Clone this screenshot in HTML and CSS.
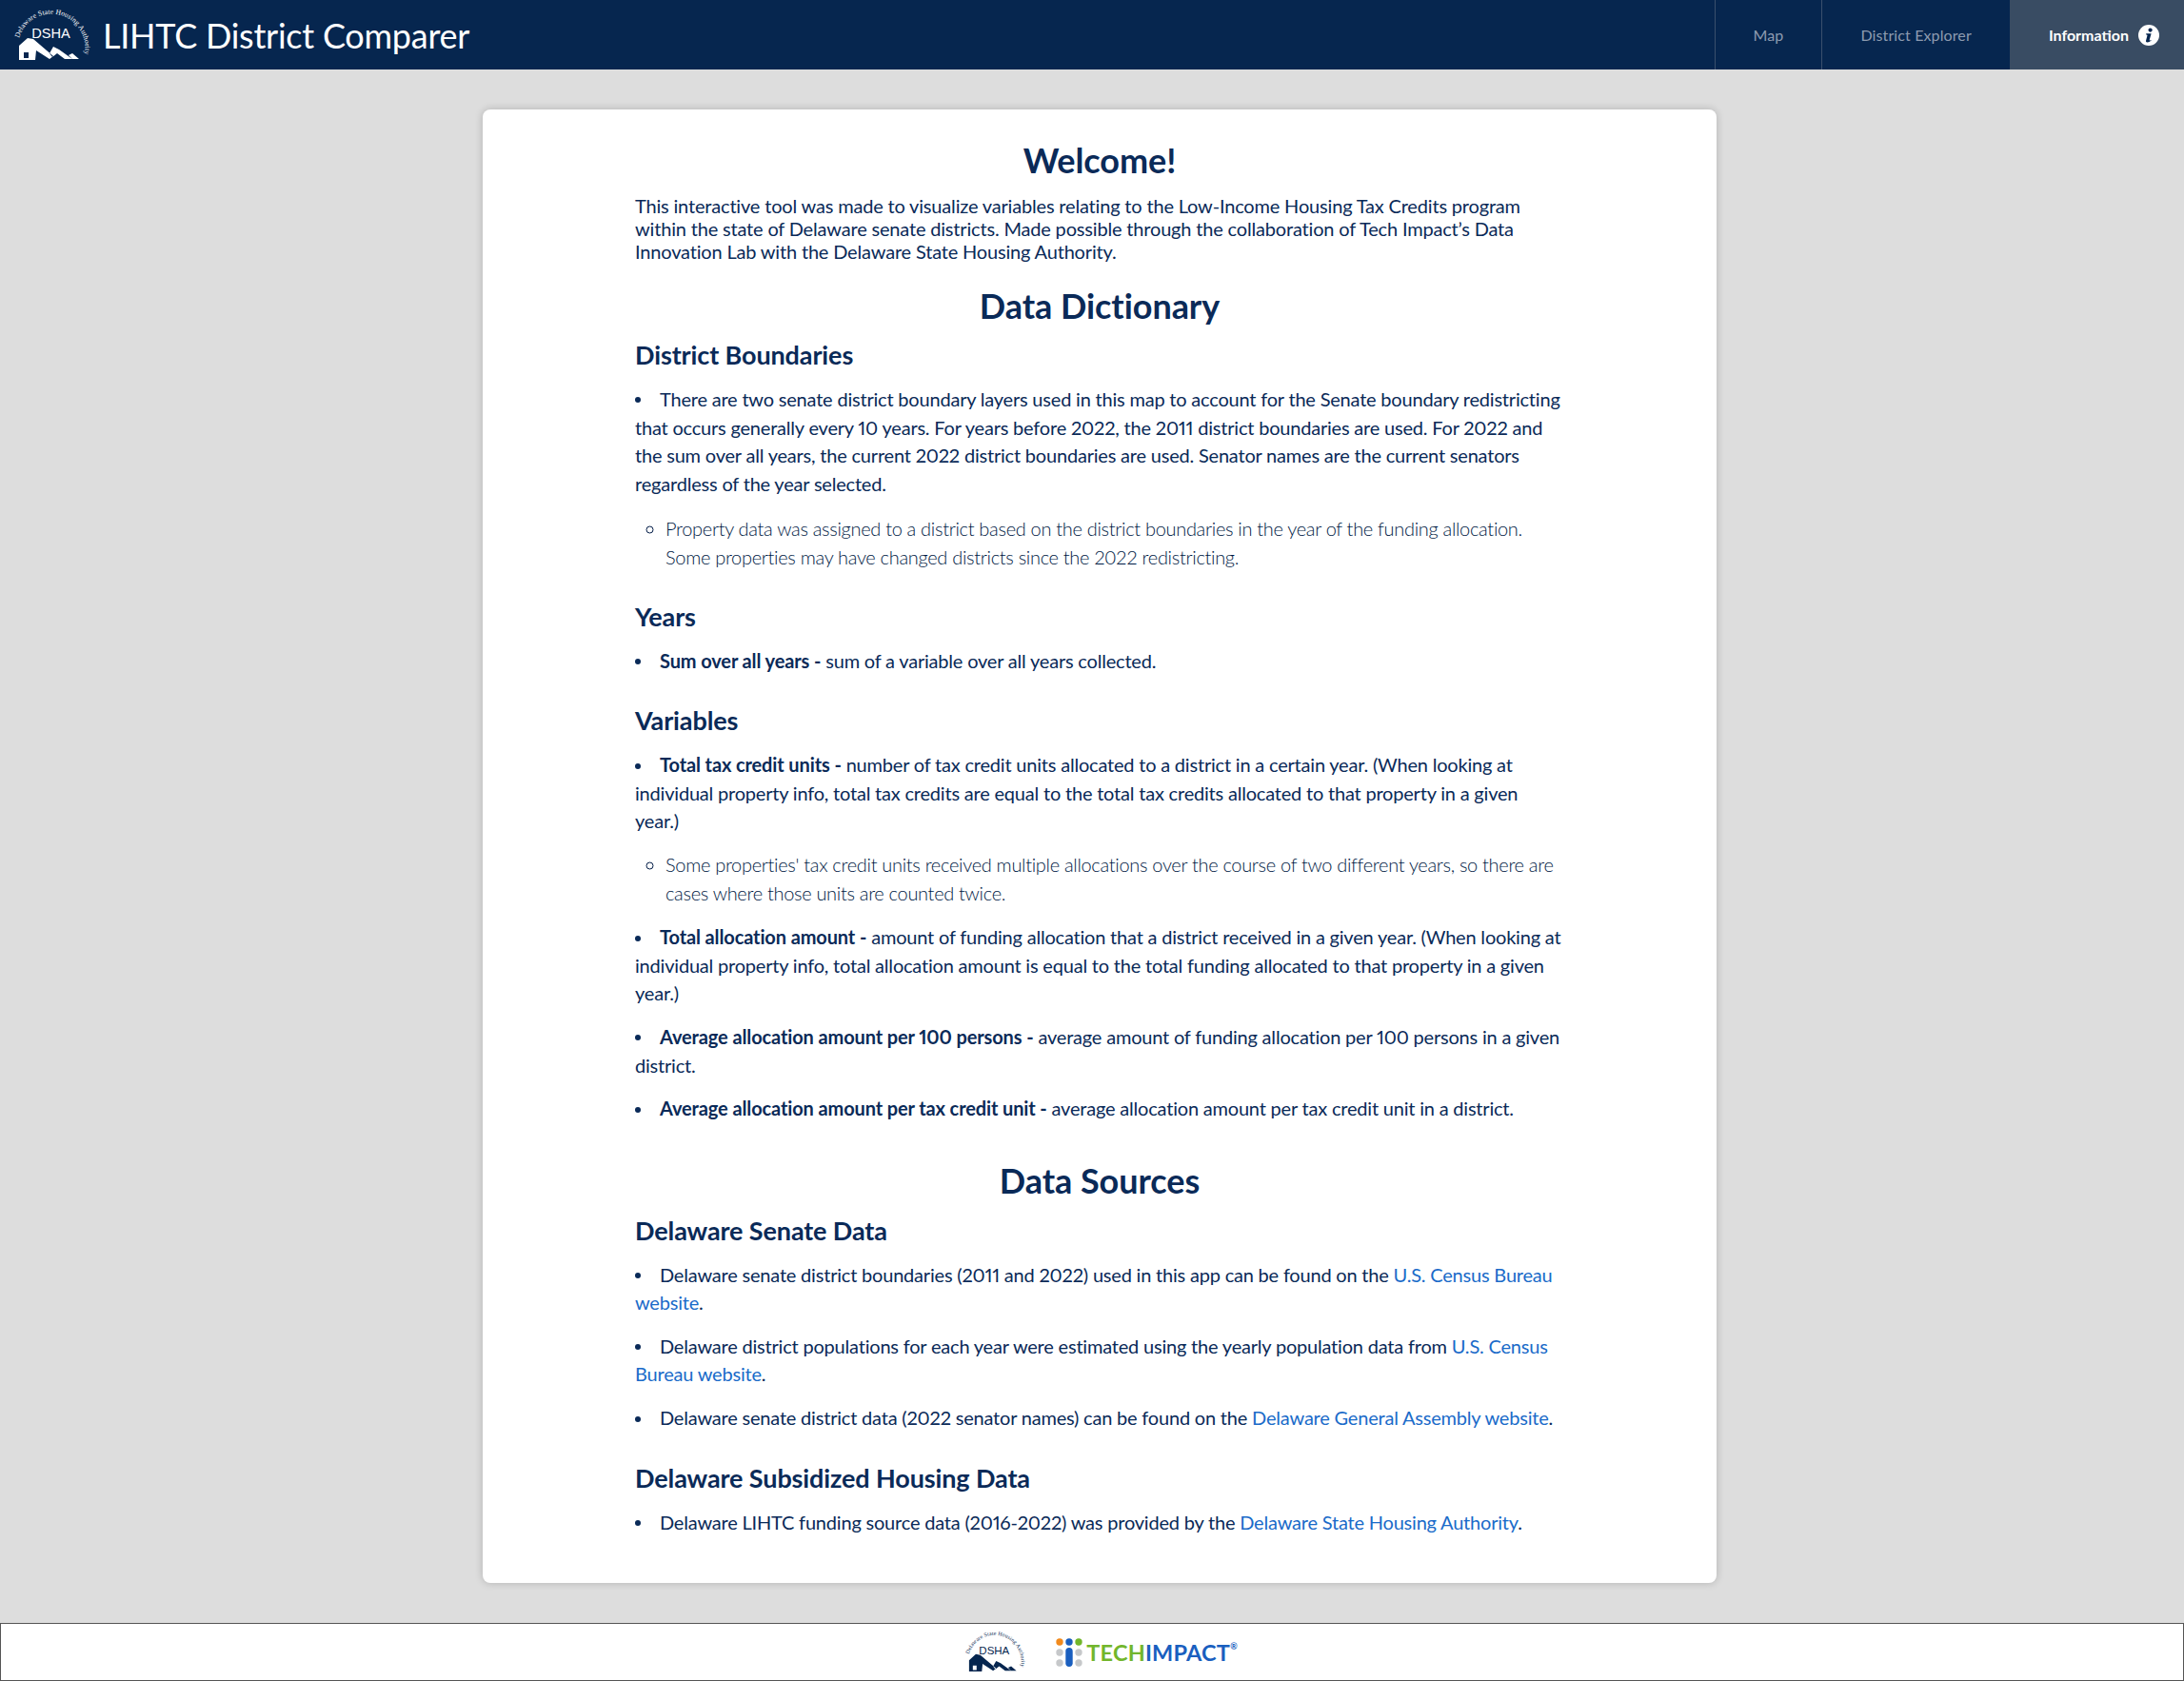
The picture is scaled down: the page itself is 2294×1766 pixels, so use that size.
FILE: index.html
```html
<!DOCTYPE html>
<html>
	<head>
		<meta charset="utf-8">
		<title>LIHTC District Comparer</title>
		<link rel="stylesheet" href="styles.css">
	</head>
	<body>
		<svg class="defs" width="0" height="0">
			<defs>
				<symbol id="dshaLogo" viewBox="0 0 90 62">
					<path id="dshaArc" d="M10 34 A35 35 0 0 1 78 54" fill="none"/>
					<text font-size="7.5" fill="currentColor" font-family="'Liberation Serif', serif"><textPath href="#dshaArc" textLength="108">Delaware State Housing Authority</textPath></text>
					<text x="43.5" y="34" text-anchor="middle" font-size="14.6" fill="currentColor" font-family="'Liberation Sans', sans-serif">DSHA</text>
					<path fill="currentColor" fill-rule="evenodd" d="M10 57 V42 L19 34 L25 35 L46 53 L42 56 L28 47 L27 57 Z M15 49 h5 v6 h-5 Z M42 50 L46 43 L52 46 L66 56 H58 L50 50 L45 54 Z M62 52 L66 50 L73 56 H66 Z"/>
				</symbol>
			</defs>
		</svg>
		<nav class="topbar">
			<div class="brand">
				<svg class="brand-logo"><use href="#dshaLogo"/></svg>
				<span class="brand-title">LIHTC District Comparer</span>
			</div>
			<ul class="tabs">
				<li class="tab"><a href="#">Map</a></li>
				<li class="tab"><a href="#">District Explorer</a></li>
				<li class="tab active">
					<a href="#">Information
						<svg class="info-icon" viewBox="0 0 22 22">
							<circle cx="11" cy="11" r="11" fill="#fff"/>
							<circle cx="12.6" cy="5.6" r="2.1" fill="#06264f"/>
							<path fill="#06264f" d="M8.2 9.3h5.4l-1.9 6.8c-.1.5.4.6 1.8-.2l.2.7c-1.5 1.3-2.9 1.9-4.1 1.9-1.4 0-1.8-.8-1.5-2l1.3-5c.2-.8-.2-1-1.2-1z"/>
						</svg>
					</a>
				</li>
			</ul>
		</nav>

		<main class="card">
			<h1>Welcome!</h1>
			<p class="intro">This interactive tool was made to visualize variables relating to the Low-Income Housing Tax Credits program within the state of Delaware senate districts. Made possible through the collaboration of Tech Impact’s Data Innovation Lab with the Delaware State Housing Authority.</p>

			<h1>Data Dictionary</h1>
			<h2>District Boundaries</h2>
			<ul class="items">
				<li>There are two senate district boundary layers used in this map to account for the Senate boundary redistricting that occurs generally every 10 years. For years before 2022, the 2011 district boundaries are used. For 2022 and the sum over all years, the current 2022 district boundaries are used. Senator names are the current senators regardless of the year selected.</li>
			</ul>
			<ul class="notes">
				<li>Property data was assigned to a district based on the district boundaries in the year of the funding allocation. Some properties may have changed districts since the 2022 redistricting.</li>
			</ul>

			<h2>Years</h2>
			<ul class="items">
				<li><b>Sum over all years -</b> sum of a variable over all years collected.</li>
			</ul>

			<h2>Variables</h2>
			<ul class="items">
				<li><b>Total tax credit units -</b> number of tax credit units allocated to a district in a certain year. (When looking at individual property info, total tax credits are equal to the total tax credits allocated to that property in a given year.)</li>
			</ul>
			<ul class="notes tight">
				<li>Some properties' tax credit units received multiple allocations over the course of two different years, so there are cases where those units are counted twice.</li>
			</ul>
			<ul class="items">
				<li><b>Total allocation amount -</b> amount of funding allocation that a district received in a given year. (When looking at individual property info, total allocation amount is equal to the total funding allocated to that property in a given year.)</li>
				<li><b>Average allocation amount per 100 persons -</b> average amount of funding allocation per 100 persons in a given district.</li>
				<li><b>Average allocation amount per tax credit unit -</b> average allocation amount per tax credit unit in a district.</li>
			</ul>

			<h1 class="section">Data Sources</h1>
			<h2>Delaware Senate Data</h2>
			<ul class="items">
				<li>Delaware senate district boundaries (2011 and 2022) used in this app can be found on the <a href="#">U.S. Census Bureau website</a>.</li>
				<li>Delaware district populations for each year were estimated using the yearly population data from <a href="#">U.S. Census Bureau website</a>.</li>
				<li>Delaware senate district data (2022 senator names) can be found on the <a href="#">Delaware General Assembly website</a>.</li>
			</ul>

			<h2>Delaware Subsidized Housing Data</h2>
			<ul class="items">
				<li>Delaware LIHTC funding source data (2016-2022) was provided by the <a href="#">Delaware State Housing Authority</a>.</li>
			</ul>
		</main>

		<footer class="footer">
			<svg class="footer-dsha"><use href="#dshaLogo"/></svg>
			<div class="techimpact">
				<svg class="ti-mark" viewBox="0 0 28 30">
					<circle cx="4" cy="4" r="3.7" fill="#f18a1d"/>
					<circle cx="14" cy="4" r="3.7" fill="#1a5fbf"/>
					<circle cx="24" cy="4" r="3.7" fill="#72b62c"/>
					<circle cx="4" cy="15" r="3.7" fill="#c6c8ca"/>
					<rect x="10.3" y="10" width="7.4" height="20" rx="3.7" fill="#1a5fbf"/>
					<circle cx="24" cy="15" r="3.7" fill="#c6c8ca"/>
					<circle cx="4" cy="26" r="3.7" fill="#c6c8ca"/>
					<circle cx="24" cy="26" r="3.7" fill="#c6c8ca"/>
				</svg>
				<span class="ti-word"><span class="ti-green">TECH</span><span class="ti-blue">IMPACT</span><sup class="ti-reg">®</sup></span>
			</div>
		</footer>
	</body>
</html>
```

FILE: styles.css
```css
*{margin: 0;padding: 0;box-sizing: border-box;}
html,
body{width: 100%;height: 100%;}
body{background-color: #dddddd;font-family: Lato, "Open Sans", sans-serif;color: #0a2a58;display: flex;flex-direction: column;min-height: 1766px;}
.defs{display: block;height: 0;}

.topbar{height: 73px;background-color: #06264f;display: flex;justify-content: space-between;flex: none;}
.brand{display: flex;align-items: center;padding-left: 10px;}
.brand-logo{width: 90px;height: 62px;color: #fff;}
.brand-title{color: #fff;font-size: 36px;margin-left: 8px;letter-spacing: -0.25px;}
.tabs{display: flex;list-style: none;}
.tab{border-left: 1px solid #3a4f6d;}
.tab a{display: flex;align-items: center;height: 73px;padding: 0 40px;color: #8d9bb0;font-size: 16px;letter-spacing: 0.12px;text-decoration: none;}
.tab.active{background-color: #394c63;border-left: none;}
.tab.active a{color: #fff;font-weight: 700;letter-spacing: 0;padding: 0 26px 0 41px;}
.info-icon{width: 22px;height: 22px;margin-left: 10px;}

.card{width: 1296px;height: 1548px;margin: 42px 0 0 calc(50% - 640px);padding: 31px 160px 0;background-color: #fff;border-radius: 8px;box-shadow: 0 0 8px rgba(0,0,0,0.2);flex: none;}
h1{font-size: 36px;line-height: 44px;font-weight: 700;text-align: center;letter-spacing: -0.05px;}
.intro{font-size: 20px;line-height: 24px;margin: 14px 0 23px;letter-spacing: -0.176px;}
h1.section{margin-top: 38px;}
h2{font-size: 27px;line-height: 33px;font-weight: 700;margin-top: 31px;letter-spacing: -0.12px;}
h1 + h2{margin-top: 13px;}
h1.section + h2{margin-top: 14px;}
.notes + h2{margin-top: 30px;}
.items{list-style: none;font-size: 20px;line-height: 29.6px;margin-top: 16px;letter-spacing: -0.2px;font-variant-numeric: proportional-nums;}
.items b{letter-spacing: -0.12px;}
.items li{margin-bottom: 16px;}
.items li::before{content: "";display: inline-block;width: 6px;height: 6px;border-radius: 50%;background-color: #0a2a58;margin: 0 20px 3px 0;vertical-align: middle;}
.notes{list-style: circle outside;font-size: 20px;font-weight: 300;line-height: 29.6px;color: #001a45;margin: 18px 0 17px 32px;letter-spacing: -0.31px;}
.notes.tight{margin-top: 15px;}
.card a{color: #1a6bc9;text-decoration: none;}

.footer{height: 61px;margin-top: auto;background-color: #fff;border: 1px solid #555;display: flex;align-items: center;justify-content: center;gap: 28px;padding-left: 16px;flex: none;}
.footer-dsha{width: 71px;height: 49px;color: #06264f;}
.techimpact{display: flex;align-items: center;gap: 4px;}
.ti-mark{width: 28px;height: 30px;}
.ti-word{font-size: 23.5px;font-weight: 700;letter-spacing: 0.2px;}
.ti-green{color: #72b62c;}
.ti-blue{color: #1a5fbf;}
.ti-reg{font-size: 9px;color: #1a5fbf;vertical-align: 12px;line-height: 0;}
```
